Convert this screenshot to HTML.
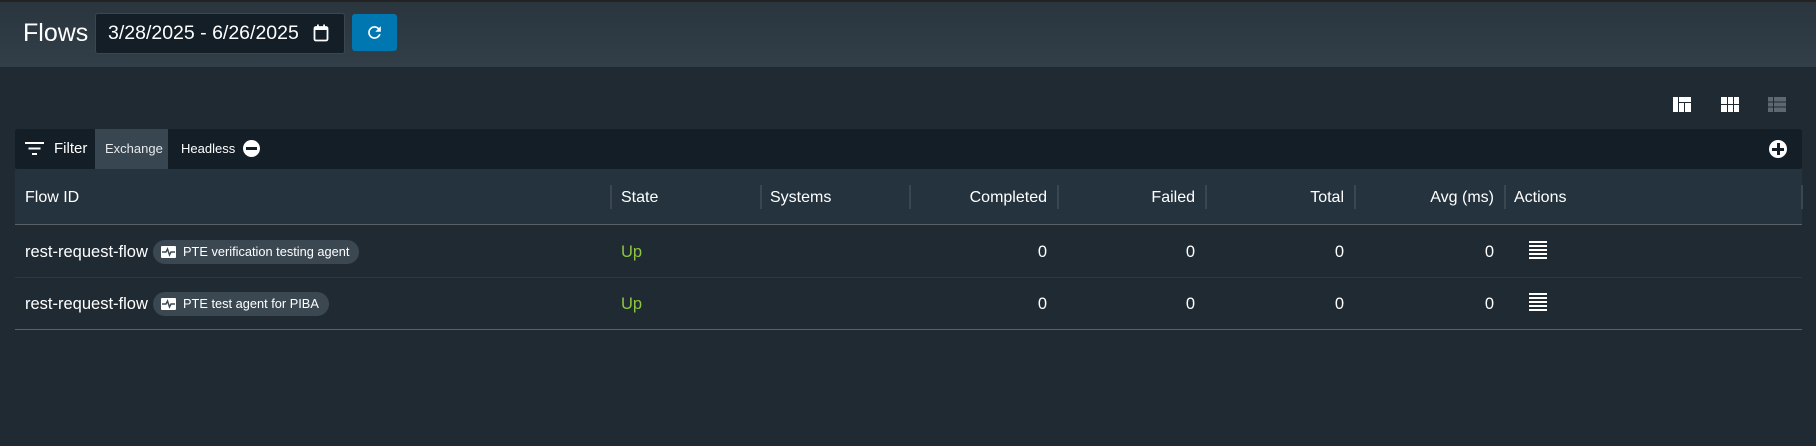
<!DOCTYPE html><html><head><style>
body{margin:0;width:1816px;height:446px;background:#1f2a33;font-family:"Liberation Sans",sans-serif;color:#fff;position:relative;overflow:hidden}
.a{position:absolute}
.hdr{left:0;top:0;width:1816px;height:65px;background:linear-gradient(#2a353e,#323f48);border-top:2px solid #222}
.th{font-size:16px;top:189px}
.r{text-align:right}
.div{width:2px;height:24px;background:#3a4650;top:185px}
.v{font-size:16.5px}
.chip{height:24px;border-radius:12px;background:#3b4852;font-size:12.8px;line-height:24px;padding:0 10px 0 30px}
.chip svg{position:absolute;left:8px;top:6px}
</style></head><body>
<div class="a hdr"></div>
<div class="a" style="left:23px;top:19px;font-size:25px">Flows</div>
<div class="a" style="left:95px;top:13px;width:248px;height:39px;background:#131e27;border:1px solid #3b4650;border-radius:3px"></div>
<div class="a" style="left:108px;top:22px;font-size:19.5px">3/28/2025 - 6/26/2025</div>
<svg class="a" style="left:313px;top:24px" width="16" height="18" viewBox="0 0 16 18"><rect x="1.5" y="3" width="13" height="13.5" rx="1.5" fill="none" stroke="#fff" stroke-width="1.8"/><rect x="1.5" y="3" width="13" height="3" fill="#fff"/><rect x="4" y="0.5" width="1.8" height="3" fill="#fff"/><rect x="10.2" y="0.5" width="1.8" height="3" fill="#fff"/></svg>
<div class="a" style="left:352px;top:14px;width:45px;height:37px;background:#0077b0;border-radius:3px"></div>
<svg class="a" style="left:365px;top:23px" width="19" height="19" viewBox="0 0 24 24"><path d="M17.65 6.35A7.960 7.96 0 0 0 12 4a8 8 0 1 0 7.73 10h-2.08A6 6 0 1 1 12 6c1.66 0 3.14.69 4.22 1.78L13 11h7V4z" fill="#fff"/></svg>
<svg class="a" style="left:1673px;top:97px" width="18" height="15"><rect width="18" height="15" fill="#fff"/><rect x="5" y="0" width="1" height="15" fill="#1f2a33"/><rect x="6" y="5" width="12" height="1" fill="#1f2a33"/><rect x="11" y="6" width="1" height="9" fill="#1f2a33"/></svg>
<svg class="a" style="left:1721px;top:97px" width="18" height="15"><rect width="18" height="15" fill="#fff"/><rect x="6" width="1" height="15" fill="#1f2a33"/><rect x="12" width="1" height="15" fill="#1f2a33"/><rect y="7" width="18" height="1" fill="#1f2a33"/></svg>
<svg class="a" style="left:1768px;top:97px" width="18" height="15"><rect width="18" height="15" fill="#5d6870"/><rect x="5" width="1" height="15" fill="#1f2a33"/><rect y="4.5" width="18" height="1" fill="#1f2a33"/><rect y="9.5" width="18" height="1" fill="#1f2a33"/></svg>
<div class="a" style="left:15px;top:129px;width:1787px;height:40px;background:#131e27;border-radius:3px"></div>
<svg class="a" style="left:25px;top:142px" width="19" height="13"><rect y="0" width="19" height="2" fill="#fff"/><rect x="3.5" y="5.5" width="12" height="2" fill="#fff"/><rect x="7" y="11" width="5" height="2" fill="#fff"/></svg>
<div class="a" style="left:54px;top:140px;font-size:15px">Filter</div>
<div class="a" style="left:95px;top:129px;width:73px;height:40px;background:#384651"></div>
<div class="a" style="left:105px;top:141px;font-size:13px;color:#e6e9eb">Exchange</div>
<div class="a" style="left:181px;top:141px;font-size:13px">Headless</div>
<div class="a" style="left:243px;top:140px;width:17px;height:17px;border-radius:50%;background:#fff"></div>
<div class="a" style="left:246px;top:147px;width:11px;height:3px;background:#131e27"></div>
<div class="a" style="left:1769px;top:140px;width:18px;height:18px;border-radius:50%;background:#fff"></div>
<div class="a" style="left:1772px;top:147.5px;width:12px;height:3px;background:#131e27"></div>
<div class="a" style="left:1776.5px;top:143px;width:3px;height:12px;background:#131e27"></div>
<div class="a" style="left:15px;top:169px;width:1787px;height:55px;background:#24333e"></div>
<div class="a" style="left:15px;top:224px;width:1787px;height:1px;background:#5a6167"></div>
<div class="a th" style="left:25px">Flow ID</div>
<div class="a div" style="left:610px"></div><div class="a th" style="left:621px">State</div>
<div class="a div" style="left:760px"></div><div class="a th" style="left:770px">Systems</div>
<div class="a div" style="left:909px"></div><div class="a th r" style="left:900px;width:147px">Completed</div>
<div class="a div" style="left:1057px"></div><div class="a th r" style="left:1100px;width:95px">Failed</div>
<div class="a div" style="left:1205px"></div><div class="a th r" style="left:1250px;width:94px">Total</div>
<div class="a div" style="left:1354px"></div><div class="a th r" style="left:1380px;width:114px">Avg (ms)</div>
<div class="a div" style="left:1504px"></div><div class="a th" style="left:1514px">Actions</div>
<div class="a div" style="left:1801px"></div>
<div class="a" style="left:15px;top:277px;width:1787px;height:1px;background:#2c3840"></div>
<div class="a" style="left:15px;top:329px;width:1787px;height:1px;background:#5a6167"></div>
<div class="a v" style="left:25px;top:243px">rest-request-flow</div>
<div class="a chip" style="left:153px;top:240px"><svg width="15" height="12"><rect width="15" height="12" rx="1" fill="#fff"/><path d="M1 6h4l1.5-3 2 6 1.5-3h4" stroke="#3b4852" stroke-width="1.4" fill="none"/></svg>PTE verification testing agent</div>
<div class="a v" style="left:621px;top:243px;color:#8dc63f">Up</div>
<div class="a v r" style="left:950px;width:97px;top:243px">0</div>
<div class="a v r" style="left:1100px;width:95px;top:243px">0</div>
<div class="a v r" style="left:1250px;width:94px;top:243px">0</div>
<div class="a v r" style="left:1380px;width:114px;top:243px">0</div>
<svg class="a" style="left:1529px;top:241px" width="18" height="18"><g fill="#fff"><rect y="0" width="18" height="2"/><rect y="4" width="18" height="2"/><rect y="8" width="18" height="2"/><rect y="12" width="18" height="2"/><rect y="16" width="18" height="2"/></g></svg>
<div class="a v" style="left:25px;top:295px">rest-request-flow</div>
<div class="a chip" style="left:153px;top:292px"><svg width="15" height="12"><rect width="15" height="12" rx="1" fill="#fff"/><path d="M1 6h4l1.5-3 2 6 1.5-3h4" stroke="#3b4852" stroke-width="1.4" fill="none"/></svg>PTE test agent for PIBA</div>
<div class="a v" style="left:621px;top:295px;color:#8dc63f">Up</div>
<div class="a v r" style="left:950px;width:97px;top:295px">0</div>
<div class="a v r" style="left:1100px;width:95px;top:295px">0</div>
<div class="a v r" style="left:1250px;width:94px;top:295px">0</div>
<div class="a v r" style="left:1380px;width:114px;top:295px">0</div>
<svg class="a" style="left:1529px;top:293px" width="18" height="18"><g fill="#fff"><rect y="0" width="18" height="2"/><rect y="4" width="18" height="2"/><rect y="8" width="18" height="2"/><rect y="12" width="18" height="2"/><rect y="16" width="18" height="2"/></g></svg>
</body></html>
